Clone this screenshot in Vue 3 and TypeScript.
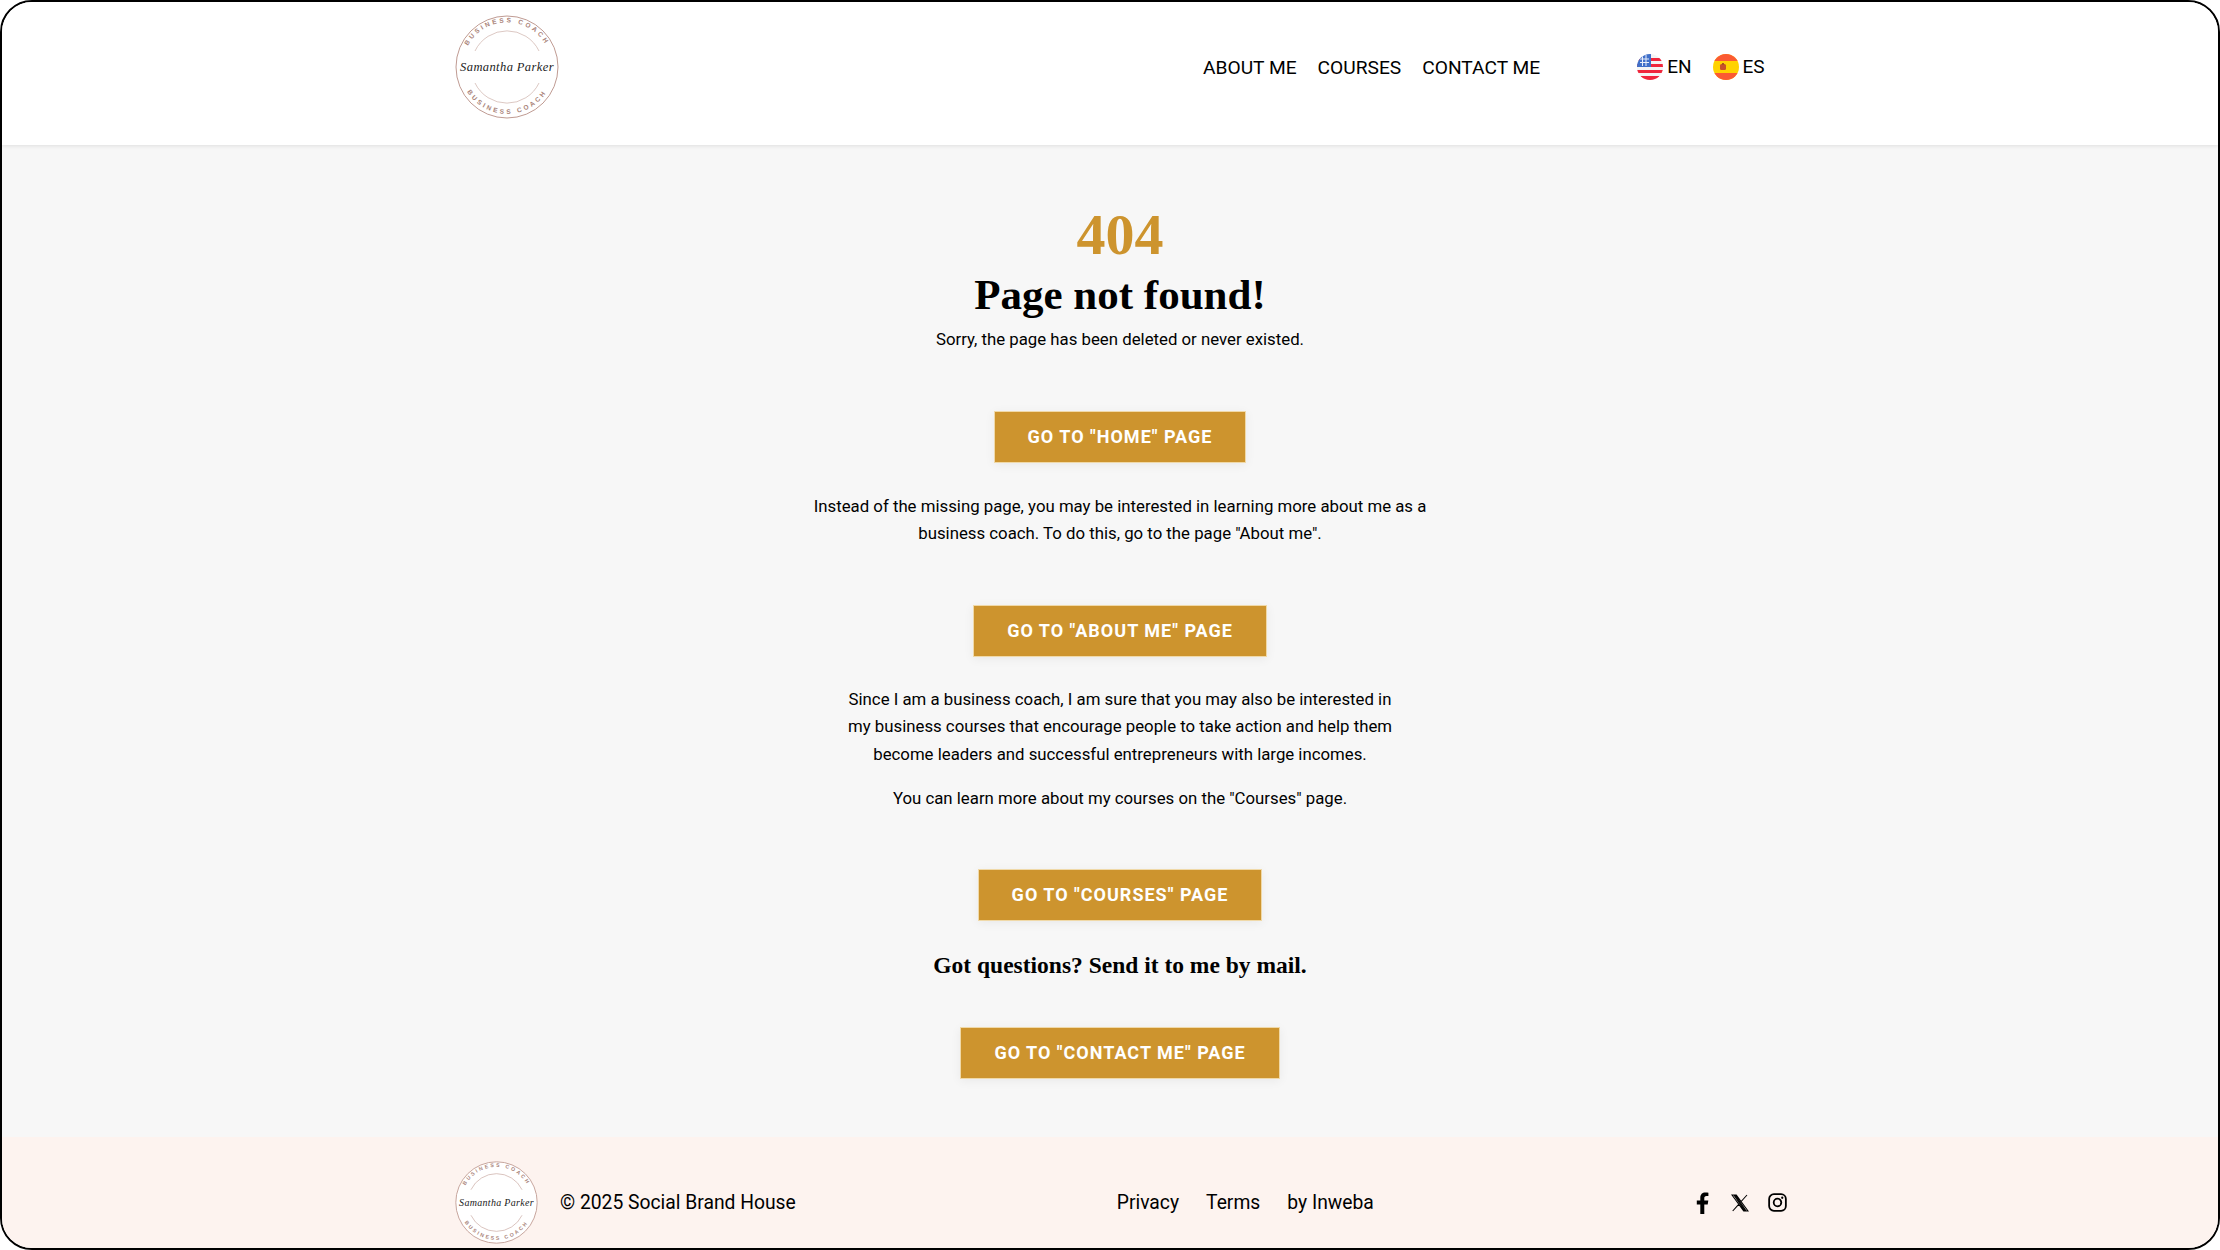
<script setup lang="ts">
const nav: string[] = ['ABOUT ME', 'COURSES', 'CONTACT ME']
const footerLinks: string[] = ['Privacy', 'Terms', 'by Inweba']
</script>

<template>
  <div class="frame">
    <header class="top">
      <svg class="logo" viewBox="0 0 104 104">
        <circle cx="52" cy="52" r="51" fill="#fff" stroke="#b88f86" stroke-width="0.9" />
        <path d="M20 36A35.500 35.500 0 0 1 84 36" fill="none" stroke="#c4a29a" stroke-width="0.6" />
        <path d="M20 68A35.500 35.500 0 0 0 84 68" fill="none" stroke="#c4a29a" stroke-width="0.6" />
        <path id="sealTopA" d="M7.900 46A44.500 44.500 0 0 1 96.100 46" fill="none" />
        <path id="sealBottomA" d="M5.400 58A47 47 0 0 0 98.600 58" fill="none" />
        <text class="seal-cap"><textPath href="#sealTopA" startOffset="50%" text-anchor="middle">BUSINESS COACH</textPath></text>
        <text class="seal-cap"><textPath href="#sealBottomA" startOffset="50%" text-anchor="middle">BUSINESS COACH</textPath></text>
        <text class="seal-name" x="52" y="56" text-anchor="middle">Samantha Parker</text>
      </svg>
      <nav class="menu">
        <a v-for="item in nav" :key="item">{{ item }}</a>
      </nav>
      <div class="langs">
        <span class="lang">
          <svg class="flag" viewBox="0 0 26 26">
            <defs><clipPath id="roundA"><circle cx="13" cy="13" r="13" /></clipPath></defs>
            <g clip-path="url(#roundA)">
              <rect width="26" height="26" fill="#f4f4f4" />
              <rect y="4" width="26" height="3" fill="#f0263c" />
              <rect y="10" width="26" height="3" fill="#f0263c" />
              <rect y="16" width="26" height="3" fill="#f0263c" />
              <rect y="22" width="26" height="4" fill="#f0263c" />
              <rect width="14" height="13" fill="#3f6fc9" />
              <path d="M3 5h9M3 8.500h9M5.500 1v11M9 1v11" stroke="#e8eefa" stroke-width="1" />
            </g>
          </svg>
          EN
        </span>
        <span class="lang">
          <svg class="flag" viewBox="0 0 26 26">
            <defs><clipPath id="roundB"><circle cx="13" cy="13" r="13" /></clipPath></defs>
            <g clip-path="url(#roundB)">
              <rect width="26" height="26" fill="#ffd200" />
              <rect width="26" height="7" fill="#fb5a33" />
              <rect y="19" width="26" height="7" fill="#fb5a33" />
              <rect x="7" y="10" width="6" height="6" rx="1.500" fill="#c8502a" />
              <rect x="9" y="9" width="2" height="2" fill="#a8521e" />
            </g>
          </svg>
          ES
        </span>
      </div>
    </header>

    <main class="content">
      <div class="code">404</div>
      <h1 class="title">Page not found!</h1>
      <p class="lead">Sorry, the page has been deleted or never existed.</p>
      <a class="btn first">GO TO "HOME" PAGE</a>
      <p class="copy narrow-a">Instead of the missing page, you may be interested in learning more about me as a business coach. To do this, go to the page "About me".</p>
      <a class="btn second">GO TO "ABOUT ME" PAGE</a>
      <p class="copy narrow-b">Since I am a business coach, I am sure that you may also be interested in my business courses that encourage people to take action and help them become leaders and successful entrepreneurs with large incomes.</p>
      <p class="copy after">You can learn more about my courses on the "Courses" page.</p>
      <a class="btn third">GO TO "COURSES" PAGE</a>
      <p class="ask">Got questions? Send it to me by mail.</p>
      <a class="btn fourth">GO TO "CONTACT ME" PAGE</a>
    </main>

    <footer class="bottom">
      <svg class="logo-small" viewBox="0 0 104 104">
        <circle cx="52" cy="52" r="51" fill="#fff" stroke="#c4a29a" stroke-width="1.200" />
        <path d="M20 36A35.500 35.500 0 0 1 84 36" fill="none" stroke="#c4a29a" stroke-width="0.8" />
        <path d="M20 68A35.500 35.500 0 0 0 84 68" fill="none" stroke="#c4a29a" stroke-width="0.8" />
        <path id="sealTopB" d="M7.900 46A44.500 44.500 0 0 1 96.100 46" fill="none" />
        <path id="sealBottomB" d="M5.400 58A47 47 0 0 0 98.600 58" fill="none" />
        <text class="seal-cap"><textPath href="#sealTopB" startOffset="50%" text-anchor="middle">BUSINESS COACH</textPath></text>
        <text class="seal-cap"><textPath href="#sealBottomB" startOffset="50%" text-anchor="middle">BUSINESS COACH</textPath></text>
        <text class="seal-name" x="52" y="56" text-anchor="middle">Samantha Parker</text>
      </svg>
      <span class="rights">© 2025 Social Brand House</span>
      <div class="links">
        <a v-for="link in footerLinks" :key="link">{{ link }}</a>
      </div>
      <div class="social">
        <svg class="fb" viewBox="0 0 13 22">
          <path d="M8.300 22V12.400h3.400l.6-3.800h-4V6.200c0-1.100.5-2.100 2.200-2.100h1.900V.8C11.700.6 10.500.4 9.400.4 6.300.4 4.300 2.300 4.300 5.700v2.900H.8v3.800h3.500V22z" fill="#000" />
        </svg>
        <svg class="xi" viewBox="0 0 18 18">
          <path d="M1 1h4.300l11.700 16h-4.300zM3.600 2l9.500 14h1.300L4.900 2zM16 1l-6.300 7M7.900 10.200 1.700 17" fill="none" stroke="#000" stroke-width="1.100" />
        </svg>
        <svg class="ig" viewBox="0 0 20 20">
          <rect x="1.200" y="1.200" width="17.600" height="17.600" rx="5" fill="none" stroke="#000" stroke-width="1.900" />
          <circle cx="10" cy="10" r="4" fill="none" stroke="#000" stroke-width="1.900" />
          <circle cx="15" cy="5" r="1.200" fill="#000" />
        </svg>
      </div>
    </footer>
  </div>
</template>

<style scoped>
.frame {
  box-sizing: border-box;
  width: 2220px;
  height: 1250px;
  display: flex;
  flex-direction: column;
  border: 2px solid #000;
  border-radius: 32px;
  overflow: hidden;
  background: #f7f7f7;
  color: #000;
  font-family: Roboto, "Liberation Sans", sans-serif;
}
.seal-cap {
  font: 700 6.500px "Liberation Sans", sans-serif;
  letter-spacing: 2.600px;
  fill: #a98379;
}
.seal-name {
  font: italic 400 12.500px "Liberation Serif", serif;
  letter-spacing: 0.400px;
  fill: #222;
}
.top {
  flex: none;
  position: relative;
  z-index: 1;
  height: 143px;
  display: flex;
  align-items: flex-start;
  padding-left: 453px;
  background: #fff;
  box-shadow: 0 1px 4px rgba(0, 0, 0, 0.1);
}
.logo {
  width: 104px;
  height: 104px;
  margin-top: 13px;
}
.menu {
  display: flex;
  gap: 21px;
  margin-left: 644px;
  margin-top: 54px;
  font-size: 19.200px;
  line-height: 24px;
}
.langs {
  display: flex;
  gap: 21px;
  margin-left: 97px;
  margin-top: 52px;
  font-size: 19px;
  line-height: 26px;
}
.lang {
  display: flex;
  align-items: center;
  gap: 4px;
}
.flag {
  width: 26px;
  height: 26px;
}
.content {
  flex: 1;
  display: flex;
  flex-direction: column;
  align-items: center;
  padding-left: 20px;
  text-align: center;
}
.code {
  margin-top: 58px;
  font: 700 58px/64px "Liberation Serif", serif;
  color: #cd942e;
}
.title {
  margin: 0;
  margin-top: 3px;
  font: 700 43px/50px "Liberation Serif", serif;
}
.lead,
.copy {
  margin: 0;
  font-size: 16.800px;
  line-height: 27.500px;
}
.lead {
  margin-top: 6px;
}
.btn {
  box-sizing: border-box;
  height: 52px;
  display: flex;
  align-items: center;
  padding: 0 33px 1px;
  border: 1px solid #f0d9a8;
  background: #cd942e;
  color: #fff;
  font-size: 18px;
  font-weight: 700;
  letter-spacing: 1px;
  box-shadow: 0 2px 10px rgba(0, 0, 0, 0.06);
}
.first {
  margin-top: 57px;
}
.narrow-a {
  width: 640px;
  margin-top: 30px;
}
.second {
  margin-top: 57px;
}
.narrow-b {
  width: 550px;
  margin-top: 29px;
}
.after {
  margin-top: 17px;
}
.third {
  margin-top: 56px;
}
.ask {
  margin: 0;
  margin-top: 30px;
  font: 700 23.500px/28px "Liberation Serif", serif;
}
.fourth {
  margin-top: 48px;
}
.bottom {
  flex: none;
  height: 111px;
  display: flex;
  align-items: center;
  padding-left: 453px;
  padding-top: 20px;
  box-sizing: border-box;
  background: #fdf3ef;
  font-size: 19.300px;
}
.logo-small {
  width: 83px;
  height: 83px;
  flex: none;
}
.rights {
  margin-left: 22px;
}
.links {
  display: flex;
  gap: 27px;
  margin-left: 321px;
}
.social {
  display: flex;
  align-items: center;
  margin-left: 322px;
}
.fb {
  width: 13px;
  height: 22px;
}
.xi {
  width: 18px;
  height: 18px;
  margin-left: 22px;
}
.ig {
  width: 19px;
  height: 19px;
  margin-left: 19px;
}
</style>

<style>
html,
body {
  margin: 0;
  background: #fff;
}
</style>
